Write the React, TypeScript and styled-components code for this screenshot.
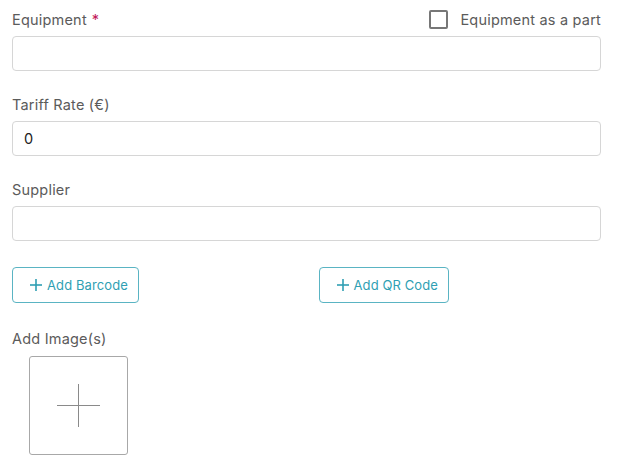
import React from 'react';
import styled, { createGlobalStyle } from 'styled-components';

const GlobalStyle = createGlobalStyle`
  html, body {
    margin: 0;
    padding: 0;
    background: #ffffff;
  }
  body {
    font-family: Inter, "Helvetica Neue", Arial, sans-serif;
    -webkit-font-smoothing: antialiased;
  }
`;

const teal = '#2f9fb3';
const labelGrey = '#5b5b5b';

const Form = styled.div`
  display: flex;
  flex-direction: column;
  width: 589px;
  padding: 8px 0 0 12px;
`;

const Field = styled.div<{ $gap?: number }>`
  display: flex;
  flex-direction: column;
  margin-bottom: ${(p) => p.$gap ?? 22}px;
`;

const LabelRow = styled.div`
  display: flex;
  justify-content: space-between;
  align-items: center;
  height: 22px;
  margin-bottom: 6px;
`;

const Label = styled.span`
  font-size: 14.5px;
  color: ${labelGrey};
  letter-spacing: 0.2px;
`;

const Required = styled.span`
  color: #c2185b;
  margin-left: 5px;
`;

const CheckLabel = styled.label`
  display: flex;
  align-items: center;
  gap: 12px;
  font-size: 14.5px;
  color: ${labelGrey};
  letter-spacing: 0.2px;
`;

const CheckBox = styled.span`
  width: 15px;
  height: 15px;
  border: 2px solid #777;
  border-radius: 2px;
`;

const Input = styled.div`
  box-sizing: border-box;
  height: 35px;
  border: 1px solid #d6d6d6;
  border-radius: 4px;
  padding: 0 11px;
  display: flex;
  align-items: center;
  font-size: 14.5px;
  color: #222;
`;

const ButtonRow = styled.div`
  display: grid;
  grid-template-columns: 1fr 1fr;
  column-gap: 24px;
  margin-bottom: 27px;
`;

const OutlineButton = styled.button`
  justify-self: start;
  display: flex;
  align-items: center;
  gap: 5px;
  height: 36px;
  padding: 0 10px 0 17px;
  border: 1.5px solid #5ab4c3;
  border-radius: 4px;
  background: #fff;
  color: ${teal};
  font-family: inherit;
  font-size: 13px;
  letter-spacing: 0.1px;
`;

const ImageBox = styled.div`
  width: 97px;
  height: 97px;
  margin: 9px 0 0 17px;
  border: 1px solid #a8a8a8;
  border-radius: 3px;
  display: flex;
  align-items: center;
  justify-content: center;
`;

const Plus = ({ size, stroke, width }: { size: number; stroke: string; width: number }) => (
  <svg width={size} height={size} viewBox={`0 0 ${size} ${size}`}>
    <line x1={size / 2} y1={0} x2={size / 2} y2={size} stroke={stroke} strokeWidth={width} />
    <line x1={0} y1={size / 2} x2={size} y2={size / 2} stroke={stroke} strokeWidth={width} />
  </svg>
);

export default function App() {
  return (
    <>
      <GlobalStyle />
      <Form>
        <Field>
          <LabelRow>
            <Label>
              Equipment<Required>*</Required>
            </Label>
            <CheckLabel>
              <CheckBox />
              Equipment as a part
            </CheckLabel>
          </LabelRow>
          <Input />
        </Field>
        <Field>
          <LabelRow>
            <Label>Tariff Rate (€)</Label>
          </LabelRow>
          <Input>0</Input>
        </Field>
        <Field $gap={26}>
          <LabelRow>
            <Label>Supplier</Label>
          </LabelRow>
          <Input />
        </Field>
        <ButtonRow>
          <OutlineButton>
            <Plus size={12} stroke={teal} width={1.6} />
            Add Barcode
          </OutlineButton>
          <OutlineButton>
            <Plus size={12} stroke={teal} width={1.6} />
            Add QR Code
          </OutlineButton>
        </ButtonRow>
        <Field $gap={0}>
          <Label>Add Image(s)</Label>
          <ImageBox>
            <Plus size={43} stroke="#8a8a8a" width={1} />
          </ImageBox>
        </Field>
      </Form>
    </>
  );
}
